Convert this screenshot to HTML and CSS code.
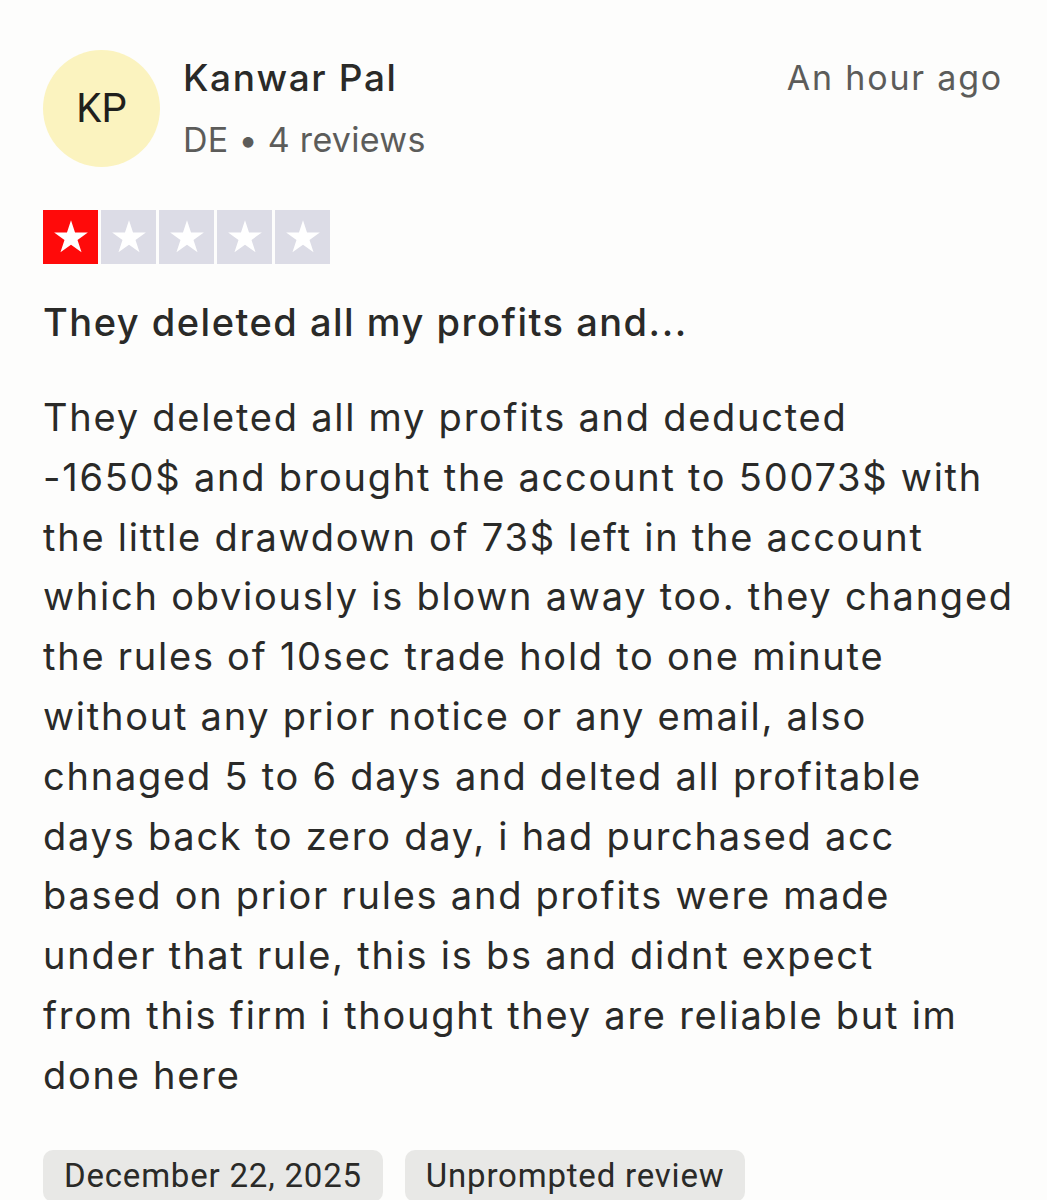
FILE: index.html
```html
<!DOCTYPE html>
<html lang="en">
<head>
<meta charset="utf-8">
<link rel="stylesheet" href="styles.css">
</head>
<body>
<article class="review">
  <header class="head">
    <div class="avatar">KP</div>
    <div class="who">
      <div class="name">Kanwar Pal</div>
      <div class="meta">DE • 4 reviews</div>
    </div>
    <div class="time">An hour ago</div>
  </header>
  <div class="stars">
    <span class="star on"><svg viewBox="0 0 24 24"><path d="M12 3.2l2.1 6.4h6.7l-5.4 3.9 2.1 6.4L12 16l-5.5 3.9 2.1-6.4-5.4-3.9h6.7z"/></svg></span>
    <span class="star"><svg viewBox="0 0 24 24"><path d="M12 3.2l2.1 6.4h6.7l-5.4 3.9 2.1 6.4L12 16l-5.5 3.9 2.1-6.4-5.4-3.9h6.7z"/></svg></span>
    <span class="star"><svg viewBox="0 0 24 24"><path d="M12 3.2l2.1 6.4h6.7l-5.4 3.9 2.1 6.4L12 16l-5.5 3.9 2.1-6.4-5.4-3.9h6.7z"/></svg></span>
    <span class="star"><svg viewBox="0 0 24 24"><path d="M12 3.2l2.1 6.4h6.7l-5.4 3.9 2.1 6.4L12 16l-5.5 3.9 2.1-6.4-5.4-3.9h6.7z"/></svg></span>
    <span class="star"><svg viewBox="0 0 24 24"><path d="M12 3.2l2.1 6.4h6.7l-5.4 3.9 2.1 6.4L12 16l-5.5 3.9 2.1-6.4-5.4-3.9h6.7z"/></svg></span>
  </div>
  <h2 class="title">They deleted all my profits and...</h2>
  <p class="body">They deleted all my profits and deducted<br>
-1650$ and brought the account to 50073$ with<br>
the little drawdown of 73$ left in the account<br>
which obviously is blown away too. they changed<br>
the rules of 10sec trade hold to one minute<br>
without any prior notice or any email, also<br>
chnaged 5 to 6 days and delted all profitable<br>
days back to zero day, i had purchased acc<br>
based on prior rules and profits were made<br>
under that rule, this is bs and didnt expect<br>
from this firm i thought they are reliable but im<br>
done here</p>
  <div class="tags">
    <span class="tag">December 22, 2025</span>
    <span class="tag">Unprompted review</span>
  </div>
</article>
</body>
</html>
```
FILE: styles.css
```css
html, body {
  margin: 0;
  padding: 0;
  background: #fdfdfc;
}
body {
  font-family: Inter, "Open Sans", sans-serif;
  color: #2a2a28;
}
.review {
  padding: 50px 20px 0 43px;
}
.head {
  display: flex;
  align-items: flex-start;
  margin-right: 24px;
}
.avatar {
  width: 117px;
  height: 117px;
  border-radius: 50%;
  background: #fbf3bf;
  display: flex;
  align-items: center;
  justify-content: center;
  font-family: Roboto, sans-serif;
  font-size: 40px;
  color: #1f1f1c;
  flex: none;
}
.who {
  margin-left: 23px;
  flex: 1;
  padding-top: 4px;
}
.name {
  font-size: 37px;
  font-weight: 500;
  line-height: 48px;
  letter-spacing: 1.6px;
  color: #2a2a28;
}
.meta {
  font-size: 34px;
  line-height: 48px;
  margin-top: 14px;
  letter-spacing: 0.3px;
  color: #5c5c5a;
}
.time {
  font-size: 34px;
  line-height: 48px;
  letter-spacing: 1.8px;
  color: #5c5c5a;
  padding-top: 4px;
}
.stars {
  display: flex;
  gap: 3px;
  margin-top: 43px;
}
.star {
  width: 55px;
  height: 54px;
  background: #dcdce6;
  display: flex;
  align-items: center;
  justify-content: center;
}
.star.on {
  background: #ff0a0a;
}
.star svg {
  width: 46px;
  height: 46px;
  fill: #fff;
}
.title {
  margin: 30px 0 0;
  font-size: 38px;
  font-weight: 500;
  line-height: 56px;
  letter-spacing: 1.5px;
}
.body {
  margin: 38px 0 0;
  font-size: 38px;
  line-height: 59.8px;
  letter-spacing: 1.75px;
  white-space: nowrap;
}
.tags {
  display: flex;
  gap: 22px;
  margin-top: 44px;
}
.tag {
  background: #e8e8e6;
  border-radius: 10px;
  padding: 0 21px;
  height: 52px;
  display: flex;
  align-items: center;
  font-family: Roboto, sans-serif;
  font-size: 33px;
  letter-spacing: 0.8px;
  color: #2a2a28;
}
```
